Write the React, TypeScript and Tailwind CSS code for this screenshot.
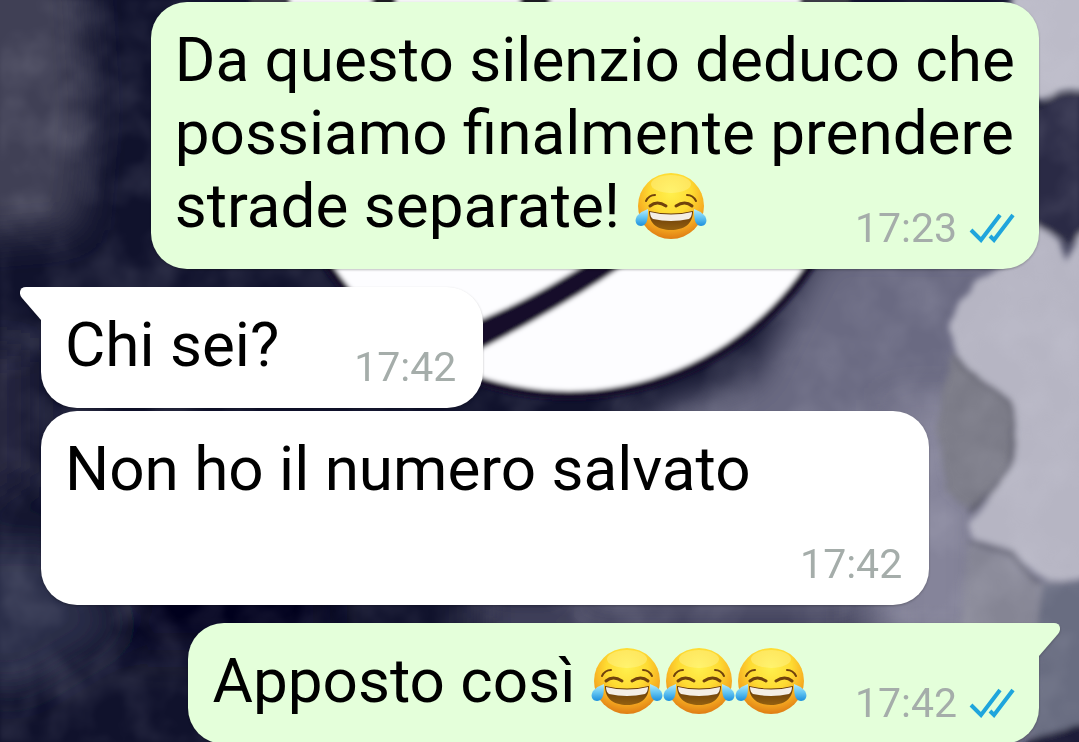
import type { ReactNode } from "react";

type Message = {
  id: number;
  text: string;
  laughs?: number;
  time: string;
  mine?: boolean;
  tail?: boolean;
  spacing: string;
};

const messages: Message[] = [
  {
    id: 1,
    text: "Da questo silenzio deduco che possiamo finalmente prendere strade separate!",
    laughs: 1,
    time: "17:23",
    mine: true,
    spacing: "mt-0",
  },
  { id: 2, text: "Chi sei?", time: "17:42", tail: true, spacing: "mt-[18px]" },
  { id: 3, text: "Non ho il numero salvato", time: "17:42", spacing: "mt-[3px]" },
  { id: 4, text: "Apposto così", laughs: 3, time: "17:42", mine: true, tail: true, spacing: "mt-[18px]" },
];

function Wallpaper() {
  return (
    <svg
      className="absolute inset-0 h-full w-full"
      viewBox="0 0 1079 742"
      preserveAspectRatio="xMidYMid slice"
      aria-hidden="true"
    >
      <defs>
        <filter id="haze" x="-30%" y="-30%" width="160%" height="160%">
          <feGaussianBlur stdDeviation="18" />
        </filter>
        <filter id="soft">
          <feGaussianBlur stdDeviation="2" />
        </filter>
        <filter id="edge" x="-10%" y="-10%" width="120%" height="120%">
          <feTurbulence type="fractalNoise" baseFrequency="0.03" numOctaves="3" seed="4" result="n" />
          <feDisplacementMap in="SourceGraphic" in2="n" scale="8" xChannelSelector="R" yChannelSelector="G" />
          <feGaussianBlur stdDeviation="3" />
        </filter>
        <filter id="grain" x="0" y="0" width="100%" height="100%">
          <feTurbulence type="fractalNoise" baseFrequency="0.02" numOctaves="4" seed="9" />
          <feColorMatrix values="0 0 0 0 0.75  0 0 0 0 0.75  0 0 0 0 0.85  1 0 0 0 -0.4" />
          <feGaussianBlur stdDeviation="2" />
        </filter>
      </defs>
      <rect width="1079" height="742" fill="#10122c" />

      {/* dark side washes */}
      <g filter="url(#haze)">
        <path d="M-40-40H80L90 110 80 230-40 240Z" fill="#403f55" />
        <path d="M-40 350H30V480L-40 520Z" fill="#25263f" />
        <path d="M-40 540H60L120 630 20 690-40 680Z" fill="#2c2e48" />
        <path d="M140 570H330V650H130Z" fill="#04061f" />
        <path d="M820 240H1120V800H1020L900 650 560 640 650 410 750 380Z" fill="#6b6a82" />
        <path d="M480 595H860V650H480Z" fill="#45455f" />
        <path d="M890 400H980V640H890Z" fill="#85849a" />
      </g>

      {/* pale paint on the right */}
      <g filter="url(#edge)">
        <path d="M1010-20H1100V94L1060 90 1040 100 1020 90Z" fill="#bcbbc8" />
        <path d="M1030 112 1056 92 1100 96V250L1068 240 1030 225Z" fill="#2b2b45" />
        <path
          d="M1100 222 1078 236 1066 262 1060 240 1034 224 1010 262 976 282 962 300 950 330 954 350 970 372 1000 394 1012 424 1014 450 1010 470 996 490 966 524 974 540 1012 552 1036 574 1050 582 1100 580Z"
          fill="#b6b5c3"
        />
        <path d="M950 352Q964 372 986 382T1012 424Q1018 462 990 492L968 508 946 490 936 430Z" fill="#7a7a86" />
        <path d="M952 352Q966 374 988 384T1014 424Q1020 464 992 492L966 512" fill="none" stroke="#5c5c6a" strokeWidth="4" />
        <path d="M968 540 1012 554 1038 582 1100 586V650H960Z" fill="#858594" />
        <path d="M968 542 1012 555 1038 584" fill="none" stroke="#646473" strokeWidth="4" />
        <path d="M1042 584H1100V760H1030Z" fill="#696d81" />
        <path d="M1030 738 1100 722V760H1010Z" fill="#1d1f38" />
      </g>

      <rect width="1079" height="742" filter="url(#grain)" opacity="0.3" />

      {/* moon figure behind the bubbles */}
      <g filter="url(#soft)">
        <circle cx="569" cy="106" r="294" fill="#12112c" />
        <circle cx="569" cy="106" r="285" fill="#fdfdff" />
        <path d="M460 360C530 324 575 298 618 269L660 240H625L578 269C543 290 515 306 460 328Z" fill="#12112c" />
        <path d="M250-10H850V10H250Z" fill="#3a3b44" />
        <path d="M290-10H372V10H290ZM396-10H520V10H396ZM550-10H800V10H550Z" fill="#f4f4f6" />
        <path d="M372-10H396V10H372ZM520-10H550V10H520Z" fill="#1c1f24" />
      </g>
    </svg>
  );
}

function Laugh() {
  return (
    <svg
      className="inline-block h-[72px] w-[72px] align-[-15px]"
      viewBox="0 0 72 72"
      role="img"
      aria-label="😂"
    >
      <defs>
        <radialGradient id="face" cx="0.5" cy="0.3" r="0.7">
          <stop offset="0" stopColor="#fff04e" />
          <stop offset="0.45" stopColor="#fedb32" />
          <stop offset="0.75" stopColor="#f7ae22" />
          <stop offset="1" stopColor="#df7d14" />
        </radialGradient>
        <linearGradient id="mouth" x1="0" y1="0" x2="0" y2="1">
          <stop offset="0" stopColor="#5f3408" />
          <stop offset="1" stopColor="#94600f" />
        </linearGradient>
        <linearGradient id="tear" x1="0" y1="0" x2="0" y2="1">
          <stop offset="0" stopColor="#b8ecfb" />
          <stop offset="0.5" stopColor="#63c5f2" />
          <stop offset="1" stopColor="#1c8fdc" />
        </linearGradient>
      </defs>
      <circle cx="36" cy="36" r="33" fill="url(#face)" />
      <ellipse cx="36" cy="14" rx="20" ry="9" fill="#fff7a0" opacity="0.4" />
      <g fill="none" stroke="#70420c" strokeLinecap="round">
        <path d="M11 31Q14 25 20 25M61 31Q58 25 52 25" strokeWidth="2" />
        <path d="M15 36Q22 30 31 36M41 36Q50 30 57 36" strokeWidth="3" />
      </g>
      <path d="M14 41Q36 46 58 41C58 54 49 60 36 60S14 54 14 41Z" fill="url(#mouth)" />
      <path d="M15 42Q36 47 57 42Q57 47 54 49Q36 53 18 49Q15 47 15 42Z" fill="#f4eee6" />
      <path d="M13 39C13 46 13 56 6 56C0 56-1 49 3 45Q7 41 13 39Z" fill="url(#tear)" />
      <path d="M59 39C59 46 59 56 66 56C72 56 73 49 69 45Q65 41 59 39Z" fill="url(#tear)" />
    </svg>
  );
}

function ReadTicks() {
  return (
    <svg className="h-[30px] w-[46px]" viewBox="0 0 46 30" role="img" aria-label="Letto">
      <g fill="none" stroke="#1fa5dc" strokeWidth="4">
        <path d="M2 17 12 27 31 2" />
        <path d="M21 23 25 27 44 2" />
      </g>
    </svg>
  );
}

function Tail({ mine }: { mine?: boolean }) {
  return (
    <svg
      className={
        mine
          ? "absolute top-0 -right-[21px] h-[34px] w-[22px] -scale-x-100 text-[#e4ffda]"
          : "absolute top-0 -left-[21px] h-[34px] w-[22px] text-white"
      }
      viewBox="0 0 22 34"
      aria-hidden="true"
    >
      <path d="M22 0H6C0 0-2 6 2 11L21 33H22Z" fill="currentColor" />
    </svg>
  );
}

function Bubble({ message, children }: { message: Message; children: ReactNode }) {
  const { mine, tail, time } = message;
  const color = mine ? "bg-[#e4ffda] pr-6" : "bg-white pr-[27px]";
  const corner = !tail ? "" : mine ? "rounded-tr-none" : "rounded-tl-none";

  return (
    <div
      className={`relative max-w-[89%] rounded-[36px] pt-[21px] pb-[26px] pl-6 drop-shadow-[0_1px_1px_rgba(0,0,0,0.25)] ${color} ${corner}`}
    >
      {tail && <Tail mine={mine} />}
      <p className="flow-root text-[62px] leading-[73px] text-black">
        {children}
        {/* floats beside the last line, or drops below it when there is no room */}
        <span
          className={`float-right flex items-center gap-3 pt-11 text-[41px] leading-[30px] text-[#a5adaa] ${mine ? "ml-12" : "ml-[75px]"}`}
        >
          <time>{time}</time>
          {mine && <ReadTicks />}
        </span>
      </p>
    </div>
  );
}

export default function App() {
  return (
    <main className="relative h-screen overflow-hidden bg-[#10122c] font-[Roboto,sans-serif]">
      <Wallpaper />
      <div className="relative flex flex-col pt-[2px] pr-10 pl-[41px]">
        {messages.map((message) => (
          <div
            key={message.id}
            className={`flex ${message.mine ? "justify-end" : "justify-start"} ${message.spacing}`}
          >
            <Bubble message={message}>
              {message.text}
              {message.laughs && " "}
              {Array.from({ length: message.laughs ?? 0 }, (_, i) => (
                <Laugh key={i} />
              ))}
            </Bubble>
          </div>
        ))}
      </div>
    </main>
  );
}
